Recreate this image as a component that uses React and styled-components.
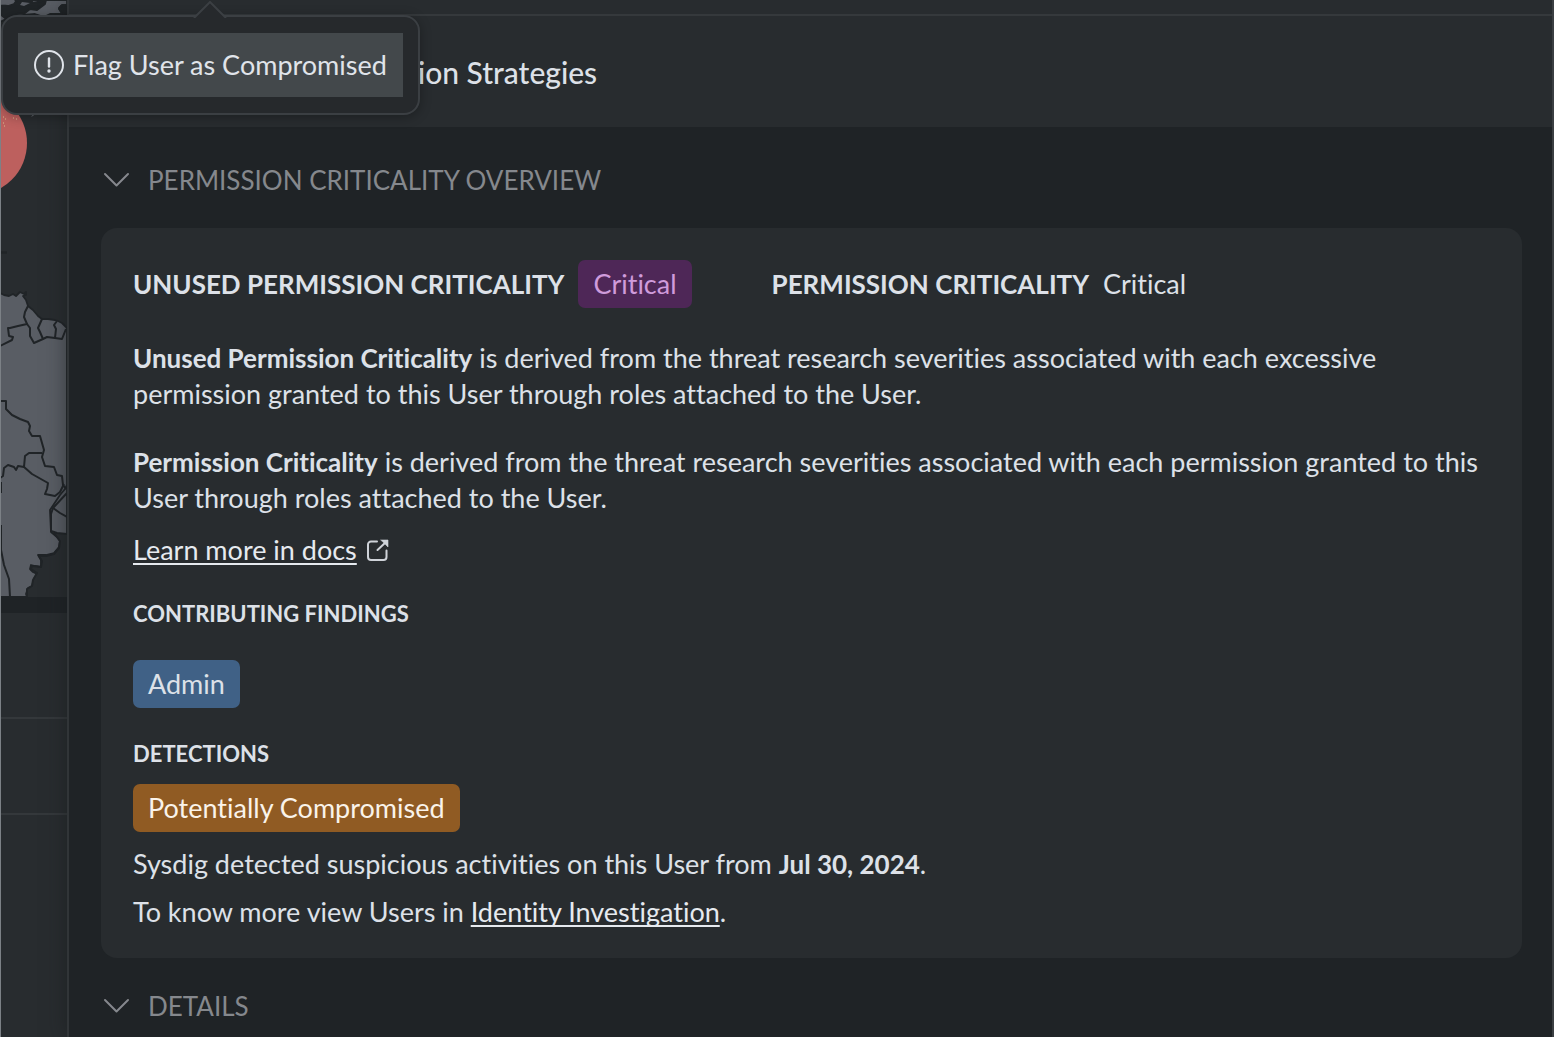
import React from "react";
import styled, { createGlobalStyle } from "styled-components";

const GlobalStyle = createGlobalStyle`
  *, *::before, *::after { box-sizing: border-box; }
  body {
    margin: 0;
    background: #1f2326;
    color: #dde1e8;
    font-family: Lato, "Open Sans", sans-serif;
    font-size: 27px;
    line-height: 36px;
    font-variant-ligatures: none;
  }
  h2, h3, p { margin: 0; }
  strong { font-size: 26px; }
`;

const Page = styled.div`
  position: relative;
  display: grid;
  grid-template-columns: 67px minmax(0, 1fr);
  min-height: 100vh;
  overflow: hidden;
`;

const Backdrop = styled.aside`
  display: flex;
  flex-direction: column;
  gap: 16px;
  border-left: 1px solid #7c8186;
`;

const MapView = styled.svg`
  display: block;
  width: 66px;
  height: 597px;
  background: #282c2f;
`;

const ListCard = styled.div`
  flex: 1;
  display: flex;
  flex-direction: column;
  background: #282c2f;
`;

const ListRow = styled.div`
  height: ${(p) => p.$height}px;
  border-bottom: 2px solid #34383b;
`;

const Drawer = styled.main`
  position: relative;
  border-left: 2px solid #313538;
  border-right: 2px solid #3b3f42;
  background: #1f2326;
  box-shadow: 0 0 20px rgba(22, 26, 27, 0.55);
`;

const DrawerTop = styled.div`
  height: 16px;
  background: #282c2f;
  border-bottom: 2px solid #35393c;
`;

const DrawerHeader = styled.header`
  display: flex;
  align-items: center;
  height: 111px;
  padding: 0 32px 0 224px;
  background: #282c2f;
`;

const TabButton = styled.button`
  padding: 0;
  border: 0;
  background: none;
  color: inherit;
  font: 500 30px/40px Lato, "Open Sans", sans-serif;
`;

const DrawerBody = styled.div`
  display: flex;
  flex-direction: column;
  gap: 32px;
  padding: 37px 30px 12px 32px;
`;

const SectionToggle = styled.button`
  display: flex;
  align-items: center;
  gap: 18px;
  padding: 0 1px;
  border: 0;
  background: none;
  color: #85888d;
  font: 400 26px/32px Lato, "Open Sans", sans-serif;
`;

const Card = styled.section`
  display: flex;
  flex-direction: column;
  align-items: flex-start;
  gap: 32px;
  padding: 32px 24px 30px 32px;
  border-radius: 16px;
  background: #282c2f;
`;

const Stack = styled.div`
  display: flex;
  flex-direction: column;
  align-items: flex-start;
  gap: 16px;
`;

const Scores = styled.div`
  display: flex;
  flex-wrap: wrap;
  align-items: center;
  gap: 16px 80px;
`;

const Score = styled.div`
  display: flex;
  align-items: center;
  gap: 14px;
`;

const ScoreLabel = styled.h3`
  font-size: 26px;
  font-weight: 700;
`;

const SubHeading = styled.h3`
  font-size: 22px;
  line-height: 28px;
  font-weight: 700;
`;

const tones = {
  critical: ["#4e2757", "#cf9bdb"],
  info: ["#406186", "#dde1e8"],
  warning: ["#905b23", "#faf3ea"],
};

const Badge = styled.span`
  display: inline-block;
  padding: 6px 15px;
  border-radius: 7px;
  background: ${(p) => tones[p.$tone][0]};
  color: ${(p) => tones[p.$tone][1]};
`;

const Line = styled.p`
  line-height: 32px;
`;

const TextLink = styled.a`
  color: #e6eaef;
  text-decoration: underline;
  text-decoration-thickness: 2px;
  text-underline-offset: 3px;
  text-decoration-skip-ink: none;
`;

const DocsRow = styled.div`
  display: flex;
  align-items: center;
  gap: 10px;
`;

const Menu = styled.div`
  position: absolute;
  top: 15px;
  left: 1px;
  z-index: 2;
  padding: 16px 15px;
  border: 2px solid #3b3f43;
  border-radius: 16px;
  background: #26292c;
  box-shadow: 0 2px 12px rgba(0, 0, 0, 0.3);
`;

const MenuArrow = styled.svg`
  position: absolute;
  bottom: 100%;
  left: 50%;
  margin: 0 0 -1px -17px;
`;

const MenuItem = styled.button`
  display: flex;
  align-items: center;
  gap: 9px;
  padding: 14px 16px;
  border: 0;
  background: #43484b;
  color: #e0e4ea;
  font: 400 27px/36px Lato, "Open Sans", sans-serif;
  font-variant-ligatures: none;
`;

const Chevron = () => (
  <svg width="28" height="16" viewBox="0 0 28 16" fill="none" stroke="currentColor" strokeWidth="2" strokeLinecap="round" strokeLinejoin="round">
    <path d="M3 2 L14.500 13.500 L26 2" />
  </svg>
);

const AlertIcon = () => (
  <svg width="30" height="30" viewBox="0 0 30 30" fill="none" stroke="currentColor" strokeWidth="2">
    <circle cx="15" cy="15" r="14" />
    <path d="M15 8.500V16.500" strokeWidth="2.400" strokeLinecap="round" />
    <circle cx="15" cy="21" r="1.700" fill="currentColor" stroke="none" />
  </svg>
);

const ExternalIcon = () => (
  <svg width="22" height="22" viewBox="0 0 22 22" fill="none" stroke="#cfd3d9" strokeWidth="2" strokeLinecap="round" strokeLinejoin="round">
    <path d="M10 2.500H4a3 3 0 0 0-3 3V18a3 3 0 0 0 3 3H16.500a3 3 0 0 0 3-3V11.500" />
    <path d="M10.500 11 L19 3" />
    <path d="M14 1H21V8L18.500 5.500L16.500 3.500Z" fill="#cfd3d9" strokeWidth="0.600" />
  </svg>
);

const WorldMap = () => (
  <MapView viewBox="1 0 66 597" aria-hidden="true">
    <g fill="#595d64" stroke="#202427" strokeWidth="1.800" strokeLinejoin="round">
      <path d="M0 0H67V14L62 13L59 9L61 6L66 5V14H50L44 17L35 14L24 15L10 17L0 22Z" />
      <path fill="#202427" d="M0 5L8 6L14 4L17 0H31L33 3L46 0L45 4L37 10L30 9L25 13L17 14L10 17L5 18L0 14Z" />
      <path stroke="none" d="M0 0H15L12 3L0 5Z" />
      <path stroke="none" d="M22 2L30 3L24 6L20 5Z" />
      <path fill="#202427" d="M67 5H62L59 8L61 12L67 16Z" />
      <path stroke="none" d="M31 117L33 114L38 112L33 116Z" />
      <path d="M0 252.500H7" strokeWidth="2.500" />
      <path d="M0 293L4 295L9 296L13 294L16 296L20 292L24 294L26 292V295L23 296L26 300L28 306L33 310L38 316L42 319L48 319L55 320L58 321L62 323L67 328V600H28L26 594L28 588L32 586L34 579L37 574L33 572L30 569L31 565L35 566L41 567L41 560L38 555L46 555L54 553L59 547L60 541L57 537L51 532L50 510L60 495L65 489L67 485V597H0Z" />
      <path fill="#282c2f" stroke="none" d="M67 533H54L60 541L59 548L54 554L46 556L39 556L42 561L41 567L32 566L31 569L37 573L33 580L32 586L27 589V600H67Z" />
      <g fill="none" strokeWidth="2">
        <path d="M28 306L25 312L24 317L27 324L18 326L10 328L8 328L9 336L13 337L12 340L0 346" />
        <path d="M27 324L30 328L30 336L34 343L43 339L40 332L38 328L42 319" />
        <path d="M43 339L47 337L55 338L56 329L54 325L57 321" />
        <path d="M55 338L62 339L66 329" />
        <path d="M0 401L6 401L6 409L12 415L20 419L28 422L30 426L29 431L32 436L40 436L42 443L44 450L42 457L45 466L54 467L57 475L62 476L63 485L66 489" />
        <path d="M0 478L3 476L4 468L8 465L14 467L16 470L18 466L24 467L25 456L29 453L42 453" />
        <path d="M24 467L32 474L48 483L47 489L45 494L55 496L60 492L64 484" />
        <path d="M53 508L60 513L67 517" />
        <path d="M67 493L53 508L51 514V531L57 533L67 534" />
        <path d="M54 533L60 541L59 548L54 554L46 556L39 556L42 561L41 567L32 566L31 569L37 573L33 580L32 586L27 589V597" />
        <path d="M1 525V550L4 565L9 579L10 597" />
        <path d="M1 482V493" />
      </g>
    </g>
    <circle cx="-25" cy="143" r="52" fill="#bd605e" />
    <path d="M3 117h1M5 119h1M3 123h1M13 118h1M16 119h1M4 126h1" stroke="#d9c08f" />
  </MapView>
);

export default function App() {
  return (
    <>
      <GlobalStyle />
      <Page>
        <Backdrop>
          <WorldMap />
          <ListCard>
            <ListRow $height={106} />
            <ListRow $height={96} />
          </ListCard>
        </Backdrop>

        <Drawer>
          <DrawerTop />
          <DrawerHeader>
            <TabButton type="button">Remediation Strategies</TabButton>
          </DrawerHeader>
          <DrawerBody>
            <SectionToggle type="button">
              <Chevron />
              PERMISSION CRITICALITY OVERVIEW
            </SectionToggle>

            <Card>
              <Scores>
                <Score>
                  <ScoreLabel>UNUSED PERMISSION CRITICALITY</ScoreLabel>
                  <Badge $tone="critical">Critical</Badge>
                </Score>
                <Score>
                  <ScoreLabel>PERMISSION CRITICALITY</ScoreLabel>
                  <span>Critical</span>
                </Score>
              </Scores>
              <p>
                <strong>Unused Permission Criticality</strong> is derived from the threat research
                severities associated with each excessive permission granted to this User through
                roles attached to the User.
              </p>
              <Stack>
                <p>
                  <strong>Permission Criticality</strong> is derived from the threat research
                  severities associated with each permission granted to this User through roles
                  attached to the User.
                </p>
                <DocsRow>
                  <TextLink href="#docs">Learn more in docs</TextLink>
                  <ExternalIcon />
                </DocsRow>
              </Stack>
              <SubHeading>CONTRIBUTING FINDINGS</SubHeading>
              <Badge $tone="info">Admin</Badge>
              <Stack>
                <SubHeading>DETECTIONS</SubHeading>
                <Badge $tone="warning">Potentially Compromised</Badge>
                <Line>
                  Sysdig detected suspicious activities on this User from{" "}
                  <strong>Jul 30, 2024</strong>.
                </Line>
                <Line>
                  To know more view Users in{" "}
                  <TextLink href="#identity">Identity Investigation</TextLink>.
                </Line>
              </Stack>
            </Card>

            <SectionToggle type="button">
              <Chevron />
              DETAILS
            </SectionToggle>
          </DrawerBody>
        </Drawer>

        <Menu>
          <MenuArrow width="34" height="17" viewBox="0 0 34 17">
            <path d="M1 17L17 1L33 17" fill="#26292c" stroke="#3b3f43" strokeWidth="2" />
          </MenuArrow>
          <MenuItem type="button">
            <AlertIcon />
            Flag User as Compromised
          </MenuItem>
        </Menu>
      </Page>
    </>
  );
}
